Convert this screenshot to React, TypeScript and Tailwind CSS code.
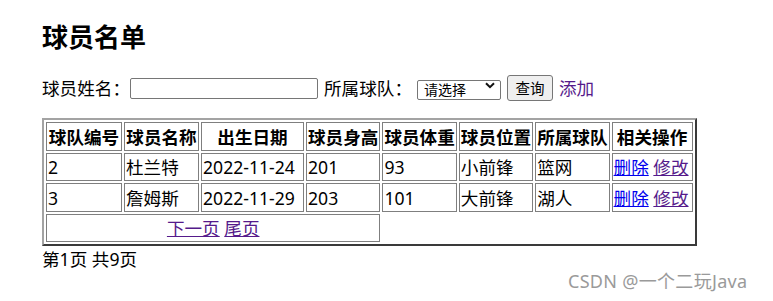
import React from "react";

const players = [
  { id: "2", name: "杜兰特", birth: "2022-11-24", height: "201", weight: "93", pos: "小前锋", team: "篮网" },
  { id: "3", name: "詹姆斯", birth: "2022-11-29", height: "203", weight: "101", pos: "大前锋", team: "湖人" },
];

const headers = [
  { label: "球队编号", w: "w-[76px]" },
  { label: "球员名称", w: "w-[75px]" },
  { label: "出生日期", w: "w-[103px]" },
  { label: "球员身高", w: "w-[74px]" },
  { label: "球员体重", w: "w-[74px]" },
  { label: "球员位置", w: "w-[74px]" },
  { label: "所属球队", w: "w-[74px]" },
  { label: "相关操作", w: "w-[81px]" },
];

const cell = "border border-[#7f7f7f] px-[1px] py-0 align-middle";

export default function App() {
  return (
    <div
      className="relative w-[773px] h-[301px] bg-white text-black pl-[42px] pt-[20px]"
      style={{ fontFamily: '"Noto Sans", "Noto Sans CJK SC", sans-serif' }}
    >
      <h2 className="text-[26px] font-bold leading-[34px] h-[34px]">球员名单</h2>

      <div className="mt-[21px] flex items-center h-[26px] text-[17.6px] leading-[26px]">
        <span className="w-[88px]">球员姓名：</span>
        <input
          type="text"
          className="w-[188px] h-[21px] border border-[#767676] rounded-[2px] bg-white"
        />
        <span className="ml-[6px] w-[88px]">所属球队：</span>
        <div className="relative ml-[5px]">
          <select className="appearance-none w-[84px] h-[20px] border border-[#767676] rounded-[2px] bg-white pl-[6px] text-[14px] leading-[18px]">
            <option>请选择</option>
          </select>
          <svg
            className="absolute right-[6px] top-[7px] pointer-events-none"
            width="10"
            height="7"
            viewBox="0 0 10 7"
          >
            <path d="M1 1.2 L5 5.2 L9 1.2" fill="none" stroke="#111" strokeWidth="2" />
          </svg>
        </div>
        <button className="ml-[6px] w-[46px] h-[26px] bg-[#efefef] border border-[#767676] rounded-[3px] text-[14.5px] leading-[22px]">
          查询
        </button>
        <a href="#" className="ml-[6px] text-[#551a8b]">添加</a>
      </div>

      <table className="mt-[17px] border-separate border-spacing-[2px] border-2 border-t-[#a3a3a3] border-l-[#a3a3a3] border-r-[#3a3a3a] border-b-[#3a3a3a] text-[17.6px] leading-[24px]">
        <thead>
          <tr className="h-[29px]">
            {headers.map((h) => (
              <th key={h.label} className={`${cell} ${h.w} font-bold text-center whitespace-nowrap`}>
                {h.label}
              </th>
            ))}
          </tr>
        </thead>
        <tbody>
          {players.map((p, i) => (
            <tr key={p.id} className={i === 0 ? "h-[28px]" : "h-[29px]"}>
              <td className={cell}>{p.id}</td>
              <td className={cell}>{p.name}</td>
              <td className={`${cell} whitespace-nowrap`}>{p.birth}</td>
              <td className={cell}>{p.height}</td>
              <td className={cell}>{p.weight}</td>
              <td className={cell}>{p.pos}</td>
              <td className={cell}>{p.team}</td>
              <td className={`${cell} whitespace-nowrap`}>
                <a href="#" className="underline text-[#0000ee]">删除</a>{" "}
                <a href="#" className="underline text-[#551a8b]">修改</a>
              </td>
            </tr>
          ))}
          <tr className="h-[28px]">
            <td colSpan={4} className={`${cell} text-center`}>
              <a href="#" className="underline text-[#551a8b]">下一页</a>{" "}
              <a href="#" className="underline text-[#551a8b]">尾页</a>
            </td>
          </tr>
        </tbody>
      </table>

      <div className="mt-[1px] text-[17.6px] leading-[24px]">第1页 共9页</div>

      <div className="absolute left-[568px] top-[269px] text-[18px] leading-[24px] text-[#9a9a9a] tracking-[0.3px]">
        CSDN @一个二玩Java
      </div>
    </div>
  );
}
